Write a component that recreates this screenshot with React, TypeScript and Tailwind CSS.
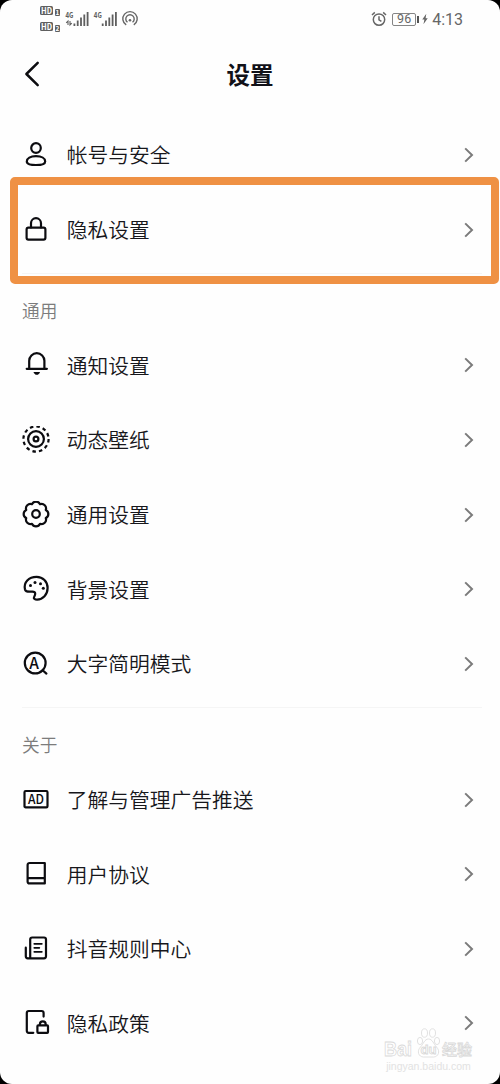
import type { ReactNode } from "react";

type Item = { label: string; icon: ReactNode };

function Icon({ children }: { children: ReactNode }) {
  return (
    <svg
      width="28"
      height="28"
      viewBox="0 0 28 28"
      fill="none"
      stroke="currentColor"
      strokeWidth="2.2"
      strokeLinecap="round"
      strokeLinejoin="round"
      className="shrink-0 text-[#0c0c10]"
    >
      {children}
    </svg>
  );
}

const account: Item[] = [
  {
    label: "帐号与安全",
    icon: (
      <Icon>
        <circle cx="14" cy="7" r="4.8" />
        <path d="M14 15.2c5.6 0 9.2 2 9.2 5.2 0 2.5-3.6 3.6-9.2 3.6s-9.2-1.1-9.2-3.6c0-3.2 3.6-5.2 9.2-5.2Z" />
      </Icon>
    ),
  },
  {
    label: "隐私设置",
    icon: (
      <Icon>
        <rect x="4.6" y="11.6" width="18.8" height="12" rx="1.8" />
        <path d="M9 11.5V7.2a5 5 0 0 1 10 0v4.3" />
      </Icon>
    ),
  },
];

const general: Item[] = [
  {
    label: "通知设置",
    icon: (
      <Icon>
        <path d="M4.7 17.8h20.2M7.2 17.6V9.8a7.6 7.6 0 0 1 15.2 0v7.8" />
        <path d="M12.3 21.6h5l-1.6 1.5h-1.8Z" strokeWidth="1.4" fill="currentColor" />
      </Icon>
    ),
  },
  {
    label: "动态壁纸",
    icon: (
      <Icon>
        <circle cx="14" cy="13" r="12.6" strokeDasharray="3.5 3.097" strokeLinecap="butt" />
        <circle cx="14" cy="13" r="7.9" />
        <circle cx="14" cy="13" r="2.4" />
      </Icon>
    ),
  },
  {
    label: "通用设置",
    icon: (
      <Icon>
        <path d="M9.94 3.21a4.5 4.5 0 0 1 8.12 0a4.5 4.5 0 0 1 5.73 5.73a4.5 4.5 0 0 1 0 8.12a4.5 4.5 0 0 1-5.73 5.73a4.5 4.5 0 0 1-8.12 0a4.5 4.5 0 0 1-5.73-5.73a4.5 4.5 0 0 1 0-8.12a4.5 4.5 0 0 1 5.73-5.73Z" />
        <circle cx="14" cy="13" r="3.8" />
      </Icon>
    ),
  },
  {
    label: "背景设置",
    icon: (
      <Icon>
        <path d="M3 14.6C1.3 7.3 6.8 1.9 14.6 1.9c6.3 0 11 4.8 11 11.2 0 6.5-4.7 11.5-10.5 11.5-2.3 0-3.7-1.2-3.1-2.5.5-1.2 1.4-2.1 1.2-3.7-.2-1.8-1.6-2-3.7-1.8-3 .3-5.7.5-6.5-2Z" />
        <g fill="currentColor" stroke="none">
          <circle cx="8.5" cy="10.6" r="1.5" />
          <circle cx="13" cy="7.6" r="1.5" />
          <circle cx="18.5" cy="8.7" r="1.5" />
          <circle cx="21.3" cy="13.2" r="1.5" />
        </g>
      </Icon>
    ),
  },
  {
    label: "大字简明模式",
    icon: (
      <Icon>
        <circle cx="13.2" cy="13" r="10.4" />
        <path d="m20.6 20.2 3.8 3.4" />
        <text
          x="12"
          y="19"
          textAnchor="middle"
          fill="currentColor"
          stroke="none"
          fontSize="15.5"
          fontWeight="500"
        >
          A
        </text>
      </Icon>
    ),
  },
];

const about: Item[] = [
  {
    label: "了解与管理广告推送",
    icon: (
      <Icon>
        <rect x="2.5" y="5" width="23" height="16.4" rx="1.2" />
        <text
          x="14"
          y="17.7"
          textAnchor="middle"
          fill="currentColor"
          stroke="none"
          fontSize="12.5"
          fontWeight="500"
          textLength="16"
          lengthAdjust="spacingAndGlyphs"
        >
          AD
        </text>
      </Icon>
    ),
  },
  {
    label: "用户协议",
    icon: (
      <Icon>
        <path d="M7.6 3h15.2v20.4H7.6a2 2 0 0 1-2-2V5a2 2 0 0 1 2-2ZM5.8 18.2h17" />
      </Icon>
    ),
  },
  {
    label: "抖音规则中心",
    icon: (
      <Icon>
        <path d="M8.2 23.3V4.5a2 2 0 0 1 2-2H22a2 2 0 0 1 2 2v16.8a2 2 0 0 1-2 2H5.8a2 2 0 0 1-2-2v-8.6" />
        <path d="M12.3 8.8h7.5M12.3 12.8h5M12.3 16.8h7.5" strokeWidth="1.8" />
      </Icon>
    ),
  },
  {
    label: "隐私政策",
    icon: (
      <Icon>
        <path d="M11.3 23.8H6.8a2 2 0 0 1-2-2V4a2 2 0 0 1 2-2h12.8a2 2 0 0 1 2 2v3.6" />
        <rect x="15.4" y="16.4" width="10.6" height="7.4" rx=".8" />
        <path d="M17.9 16v-.8a2.9 2.9 0 0 1 5.8 0v.8" />
      </Icon>
    ),
  },
];

function Chevron() {
  return (
    <svg width="10" height="16" viewBox="0 0 10 16" fill="none" stroke="#7b7b7b" strokeWidth="2">
      <path d="m1.2 1.4 6.8 6.6-6.8 6.6" />
    </svg>
  );
}

function Row({ label, icon }: Item) {
  return (
    <div className="flex h-[74.6px] items-center pr-[26px] pl-[22px]">
      {icon}
      <span className="ml-[16.8px] flex-1 text-[20.75px] font-[350] text-[#17171b]">{label}</span>
      <Chevron />
    </div>
  );
}

function SectionTitle({ children }: { children: ReactNode }) {
  return (
    <div className="mr-[18px] ml-[22px] h-[61.2px] pt-[6px]">
      <div className="border-t border-[#f5f5f5] pt-[23px] text-[17.7px] leading-[26px] font-[350] text-[#7c7c7c]">
        {children}
      </div>
    </div>
  );
}

function SignalIcons() {
  return (
    <svg width="104" height="32" viewBox="0 0 104 32" fill="#5f5f5f">
      {[6, 22].map((y, i) => (
        <g key={y}>
          <rect x="1" y={y} width="13" height="9" rx="1.6" />
          <text
            x="7.5"
            y={y + 7.6}
            fill="#fff"
            fontSize="8.5"
            fontWeight="700"
            textAnchor="middle"
            textLength="11"
            lengthAdjust="spacingAndGlyphs"
          >
            HD
          </text>
          <rect x="16" y={y + 3} width="5" height="7" rx="1" />
          <text x="18.5" y={y + 9} fill="#fff" fontSize="6.5" fontWeight="700" textAnchor="middle">
            {i + 1}
          </text>
        </g>
      ))}
      {[26.5, 54.8].map((x) => (
        <g key={x}>
          <text x={x} y="17.5" fontSize="8" fontWeight="700" textLength="8" lengthAdjust="spacingAndGlyphs">
            4G
          </text>
          <rect x={x + 8} y="23.5" width="1.8" height="2.5" />
          <rect x={x + 11.3} y="20.5" width="1.8" height="5.5" />
          <rect x={x + 14.6} y="17.5" width="1.8" height="8.5" />
          <rect x={x + 17.9} y="14.5" width="1.8" height="11.5" />
          <rect x={x + 21.2} y="12" width="1.8" height="14" />
        </g>
      ))}
      <path d="M29 25v-4l-1.8 1.8M31 21v4l1.8-1.8" fill="none" stroke="#5f5f5f" strokeWidth="1.1" />
      <g fill="none" stroke="#666" strokeWidth="1.4">
        <path d="M87.2 24.9a7.2 7.2 0 1 1 7.6 0" />
        <path d="M88.5 22.3a4.2 4.2 0 1 1 5 0" />
        <circle cx="91" cy="20.2" r="1.3" fill="#666" stroke="none" />
      </g>
    </svg>
  );
}

function StatusBar() {
  return (
    <div className="flex h-[38px] items-start justify-between pr-[37px] pl-[39px]">
      <SignalIcons />
      <div className="flex h-[38px] items-center text-[#666]">
        <svg width="16" height="16" viewBox="0 0 16 16" fill="none" stroke="currentColor" strokeWidth="1.5">
          <circle cx="8" cy="8.6" r="5.7" />
          <path d="M8 5.3v3.6l2.4 1.5M1 4l2.8-2.6M15 4l-2.8-2.6" />
        </svg>
        <div className="ml-[5px] flex h-[13px] w-[24px] items-center justify-center rounded-[2px] border border-[#858585] font-[Roboto] text-[12.5px] leading-none">
          96
        </div>
        <div className="ml-px h-[7px] w-[2px] bg-[#555]" />
        <svg width="6" height="12" viewBox="0 0 7 12" className="ml-[3px]" fill="currentColor">
          <path d="M5 0 .3 6.7h2.5L1.7 12 6.7 5H4.2Z" />
        </svg>
        <span className="ml-[4px] pt-px font-[Roboto] text-[16px] leading-none">4:13</span>
      </div>
    </div>
  );
}

function Watermark() {
  return (
    <div className="absolute right-[26px] bottom-[11px] w-[91px] text-[#e2e2e2]">
      <svg
        width="91"
        height="32"
        viewBox="0 0 91 32"
        className="block font-['Liberation_Sans','Noto_Sans_CJK_SC',sans-serif]"
        fill="#fff"
        stroke="#d9d9d9"
        strokeWidth=".8"
      >
        <text x="1" y="29" fontSize="20" fontWeight="700" textLength="28" lengthAdjust="spacingAndGlyphs">
          Bai
        </text>
        <ellipse cx="37" cy="14" rx="2.6" ry="3.6" />
        <ellipse cx="41.5" cy="6" rx="3" ry="4.2" />
        <ellipse cx="49.5" cy="6" rx="3" ry="4.2" />
        <ellipse cx="54" cy="14" rx="2.6" ry="3.6" />
        <path d="M45.5 12c4 0 5 5 8 8 4 4 2 10-3 10h-10c-5 0-7-6-3-10 3-3 4-8 8-8Z" />
        <text x="37.5" y="27" fontSize="12" fontWeight="700" textLength="16" lengthAdjust="spacingAndGlyphs">
          du
        </text>
        <text x="59" y="28" fontSize="15" fontWeight="500" textLength="30" lengthAdjust="spacingAndGlyphs">
          经验
        </text>
      </svg>
      <div className="text-center font-['Liberation_Sans',sans-serif] text-[10.5px] leading-[14px] whitespace-nowrap">
        jingyan.baidu.com
      </div>
    </div>
  );
}

export default function App() {
  return (
    <div className="h-[1084px] w-[500px] overflow-hidden bg-black font-['Noto_Sans_CJK_SC',sans-serif]">
      <div className="relative h-full overflow-hidden rounded-[12px] bg-[#fefefe]">
        <StatusBar />
        <header className="grid h-[79.7px] grid-cols-3 items-start px-[24px] pt-[22px]">
          <svg
            width="17"
            height="26"
            viewBox="0 0 17 26"
            fill="none"
            stroke="#0c0c10"
            strokeWidth="2.5"
            strokeLinecap="round"
            strokeLinejoin="round"
            className="mt-px"
          >
            <path d="M13.7 1.8 2.4 13l11.3 11.2" />
          </svg>
          <h1 className="text-center text-[23.5px] leading-[28px] font-bold text-[#111118]">设置</h1>
        </header>
        <main>
          {account.map((item) => (
            <Row key={item.label} {...item} />
          ))}
          <SectionTitle>通用</SectionTitle>
          {general.map((item) => (
            <Row key={item.label} {...item} />
          ))}
          <SectionTitle>关于</SectionTitle>
          {about.map((item) => (
            <Row key={item.label} {...item} />
          ))}
        </main>
        <div className="absolute top-[177px] left-[10px] h-[107px] w-[489px] rounded-[5px] border-8 border-[#ef9144]" />
        <Watermark />
      </div>
    </div>
  );
}
